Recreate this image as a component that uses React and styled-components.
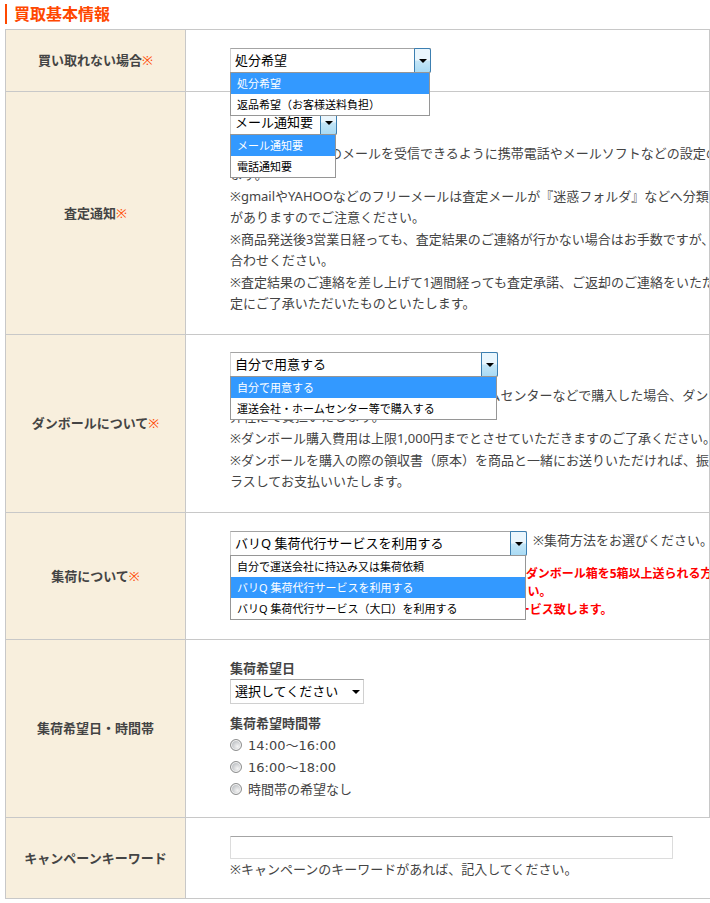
import React from "react";
import styled, { createGlobalStyle, css } from "styled-components";

const GlobalStyle = createGlobalStyle`
  *, *::before, *::after { box-sizing: border-box; }
  body {
    margin: 0;
    background: #fff;
    color: #444;
    font-family: "Noto Sans", "Noto Sans CJK JP", sans-serif;
    font-size: 13px;
    line-height: 21px;
  }
  select, input, button { font: inherit; }
`;

const Page = styled.main`
  padding: 4px 0 4px 5px;
  overflow-x: clip;
`;

const Heading = styled.h2`
  margin: 0 0 5px;
  padding-left: 7px;
  border-left: 2px solid #ff4800;
  color: #ff4800;
  font-size: 16px;
  font-weight: 700;
  line-height: 20px;
`;

const FormTable = styled.table`
  width: 100%;
  table-layout: fixed;
  border-collapse: separate;
  border-spacing: 0;
  border-top: 1px solid #c8c8c8;
`;

const RowHead = styled.th`
  width: 181px;
  padding: 0;
  border: 1px solid #c8c8c8;
  border-top: 0;
  background: #f8efdd;
  font-weight: 700;
  text-align: center;
  vertical-align: middle;
`;

const RowBody = styled.td`
  padding: ${(p) => p.$pad || "18px 0"};
  padding-left: 44px;
  border-bottom: 1px solid #c8c8c8;
  border-right: ${(p) => (p.$open ? "0" : "1px solid #c8c8c8")};
  vertical-align: top;
`;

const Mark = styled.span`
  color: #ff4800;
  font-weight: 400;
`;

const Field = styled.div`
  display: flex;
  gap: 6px;
  white-space: nowrap;
`;

const FieldHint = styled.span`
  line-height: 18px;
`;

const SelectBox = styled.div`
  position: relative;
  flex: none;
  display: grid;
  grid-template-columns: 1fr 17px;
  width: ${(p) => p.$width}px;
  height: 25px;
`;

const NativeSelect = styled.select`
  grid-area: 1 / 1 / 2 / 3;
  appearance: none;
  width: 100%;
  height: 25px;
  margin: 0;
  padding: 0 17px 0 4px;
  border: 1px solid #b4b4b4;
  border-color: #a4a4a4 #d0d0d0 #d0d0d0;
  border-radius: 0;
  background: #fff;
  color: #000;
  outline: 0;
`;

const Arrow = styled.span`
  grid-area: 1 / 2 / 2 / 3;
  z-index: 1;
  display: grid;
  place-items: center;
  pointer-events: none;
  ${(p) =>
    p.$open &&
    css`
      border: 1px solid #3c7fb1;
      border-radius: 0 2px 2px 0;
      background: linear-gradient(#eaf6fd 0 48%, #c4e5f6 52%, #a9dbf5);
    `}
`;

const Menu = styled.ul`
  position: absolute;
  z-index: 5;
  top: 24px;
  left: 0;
  right: 1px;
  margin: 0;
  padding: 0;
  border: 1px solid #969696;
  background: #fff;
  list-style: none;
`;

const MenuItem = styled.li`
  padding-left: 6px;
  background: ${(p) => (p.$active ? "#3399ff" : "#fff")};
  color: ${(p) => (p.$active ? "#fff" : "#000")};
  font-size: 11px;
  line-height: 21px;
  white-space: nowrap;
`;

const Notes = styled.div`
  display: grid;
  gap: 1px;
  margin-top: 8px;
  overflow: hidden;
  white-space: nowrap;
`;

const Note = styled.p`
  margin: 0;
`;

const Warning = styled.p`
  margin: 9px 0 0;
  overflow: hidden;
  color: #f00;
  font-size: 12px;
  font-weight: 700;
  line-height: 18px;
  white-space: nowrap;
`;

const Label = styled.label`
  display: block;
  font-weight: 700;
`;

const RadioGroup = styled.fieldset`
  margin: 9px 0 0;
  padding: 0;
  border: 0;
  font-family: "DejaVu Sans", "Noto Sans CJK JP", sans-serif;
`;

const Legend = styled.legend`
  padding: 0;
  font-weight: 700;
`;

const RadioLabel = styled.label`
  display: flex;
  align-items: center;
  gap: 6px;
  height: 22px;
`;

const Radio = styled.input`
  appearance: none;
  width: 12px;
  height: 12px;
  margin: 0;
  border: 1px solid #8e8f8f;
  border-radius: 50%;
  background: radial-gradient(circle at 65% 65%, #f4f4f4, #c4c7ca 60%);
  box-shadow: inset 0 0 0 1px #f4f4f4;
`;

const TextInput = styled.input`
  display: block;
  width: 100%;
  max-width: 443px;
  height: 23px;
  padding: 0 4px;
  border: 1px solid #dcdcdc;
  border-top-color: #a4a4a4;
  border-radius: 1px;
  background: #fff;
`;

function Select({ id, label, options, value, width, open }) {
  return (
    <SelectBox $width={width}>
      <NativeSelect id={id} aria-label={label} defaultValue={value}>
        {options.map((o) => (
          <option key={o}>{o}</option>
        ))}
      </NativeSelect>
      <Arrow $open={open}>
        <svg width="8" height="4" viewBox="0 0 8 4" aria-hidden="true">
          <path d="M0 0h8L4 4z" fill="#000" />
        </svg>
      </Arrow>
      {open && (
        <Menu role="listbox" aria-label={label}>
          {options.map((o) => (
            <MenuItem key={o} role="option" aria-selected={o === value} $active={o === value}>
              {o}
            </MenuItem>
          ))}
        </Menu>
      )}
    </SelectBox>
  );
}

function Row({ title, required, pad, open, children }) {
  return (
    <tr>
      <RowHead scope="row">
        {title}
        {required && <Mark>※</Mark>}
      </RowHead>
      <RowBody $pad={pad} $open={open}>
        {children}
      </RowBody>
    </tr>
  );
}

export default function App() {
  return (
    <Page>
      <GlobalStyle />
      <Heading>買取基本情報</Heading>
      <FormTable>
        <tbody>
          <Row title="買い取れない場合" required>
            <Select
              label="買い取れない場合"
              width={201}
              open
              value="処分希望"
              options={["処分希望", "返品希望（お客様送料負担）"]}
            />
          </Row>

          <Row title="査定通知" required pad="18px 0 20px">
            <Select
              label="査定通知"
              width={107}
              open
              value="メール通知要"
              options={["メール通知要", "電話通知要"]}
            />
            <Notes>
              <Note>
                ※必ずバリQからのメールを受信できるように携帯電話やメールソフトなどの設定の変
                <br />
                ます。
              </Note>
              <Note>
                ※gmailやYAHOOなどのフリーメールは査定メールが『迷惑フォルダ』などへ分類さ
                <br />
                がありますのでご注意ください。
              </Note>
              <Note>
                ※商品発送後3営業日経っても、査定結果のご連絡が行かない場合はお手数ですが、バ
                <br />
                合わせください。
              </Note>
              <Note>
                ※査定結果のご連絡を差し上げて1週間経っても査定承諾、ご返却のご連絡をいただけ
                <br />
                定にご了承いただいたものといたします。
              </Note>
            </Notes>
          </Row>

          <Row title="ダンボールについて" required pad="17px 0 20px">
            <Select
              label="ダンボールについて"
              width={268}
              open
              value="自分で用意する"
              options={["自分で用意する", "運送会社・ホームセンター等で購入する"]}
            />
            <Notes>
              <Note>
                ※ダンボールを運送会社またはお近くのホームセンターなどで購入した場合、ダンボー
                <br />
                弊社にて負担いたします。
              </Note>
              <Note>※ダンボール購入費用は上限1,000円までとさせていただきますのご了承ください。</Note>
              <Note>
                ※ダンボールを購入の際の領収書（原本）を商品と一緒にお送りいただければ、振込に
                <br />
                ラスしてお支払いいたします。
              </Note>
            </Notes>
          </Row>

          <Row title="集荷について" required pad="18px 0 20px">
            <Field>
              <Select
                label="集荷について"
                width={297}
                open
                value="バリQ 集荷代行サービスを利用する"
                options={[
                  "自分で運送会社に持込み又は集荷依頼",
                  "バリQ 集荷代行サービスを利用する",
                  "バリQ 集荷代行サービス（大口）を利用する",
                ]}
              />
              <FieldHint>※集荷方法をお選びください。</FieldHint>
            </Field>
            <Warning>
              ※バリQ集荷代行サービス（大口）のご利用は、一度にダンボール箱を5箱以上送られる方
              <br />
              バリQ集荷代行サービス（大口）の利用をお選びください。
              <br />
              送料とダンボール箱は、お客様のご負担なしで無料サービス致します。
            </Warning>
          </Row>

          <Row title="集荷希望日・時間帯" pad="18px 0 17px">
            <Label htmlFor="pickup-date">集荷希望日</Label>
            <Select
              id="pickup-date"
              width={134}
              value="選択してください"
              options={["選択してください"]}
            />
            <RadioGroup>
              <Legend>集荷希望時間帯</Legend>
              {["14:00～16:00", "16:00～18:00", "時間帯の希望なし"].map((t) => (
                <RadioLabel key={t}>
                  <Radio type="radio" name="pickup-time" />
                  {t}
                </RadioLabel>
              ))}
            </RadioGroup>
          </Row>

          <Row title="キャンペーンキーワード" open>
            <TextInput type="text" aria-label="キャンペーンキーワード" />
            <Note>※キャンペーンのキーワードがあれば、記入してください。</Note>
          </Row>
        </tbody>
      </FormTable>
    </Page>
  );
}
